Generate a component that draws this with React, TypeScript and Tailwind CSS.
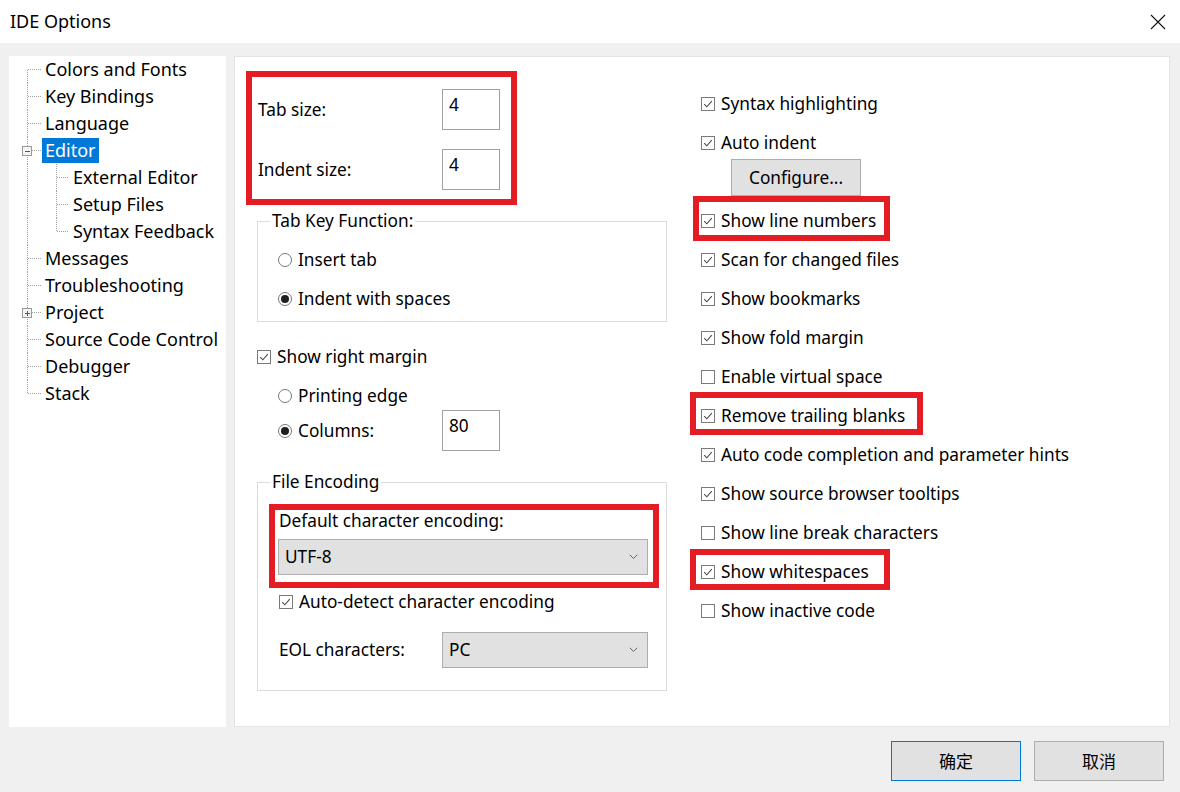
import React from 'react';

type TreeItem = {
  label: string;
  level: 1 | 2;
  box?: 'minus' | 'plus';
  selected?: boolean;
  first?: boolean;
  last?: boolean;
  lastChild?: boolean;
};

const tree: TreeItem[] = [
  { label: 'Colors and Fonts', level: 1, first: true },
  { label: 'Key Bindings', level: 1 },
  { label: 'Language', level: 1 },
  { label: 'Editor', level: 1, box: 'minus', selected: true },
  { label: 'External Editor', level: 2 },
  { label: 'Setup Files', level: 2 },
  { label: 'Syntax Feedback', level: 2, lastChild: true },
  { label: 'Messages', level: 1 },
  { label: 'Troubleshooting', level: 1 },
  { label: 'Project', level: 1, box: 'plus' },
  { label: 'Source Code Control', level: 1 },
  { label: 'Debugger', level: 1 },
  { label: 'Stack', level: 1, last: true },
];

const dot = { stroke: '#a0a0a0', strokeDasharray: '1 1', shapeRendering: 'crispEdges' as const };

function Connector({ item }: { item: TreeItem }) {
  if (item.level === 2) {
    return (
      <svg width="61" height="27" className="shrink-0">
        <line x1="18.5" y1="0" x2="18.5" y2="27" {...dot} />
        <line x1="47.5" y1="0" x2="47.5" y2={item.lastChild ? 13.5 : 27} {...dot} />
        <line x1="48" y1="13.5" x2="60" y2="13.5" {...dot} />
      </svg>
    );
  }
  return (
    <svg width="33" height="27" className="shrink-0">
      <line x1="18.5" y1={item.first ? 13.5 : 0} x2="18.5" y2={item.last ? 13.5 : 27} {...dot} />
      <line x1="19" y1="13.5" x2="33" y2="13.5" {...dot} />
      {item.box && (
        <g shapeRendering="crispEdges">
          <rect x="13.5" y="9.5" width="9" height="9" fill="#f4f4f4" stroke="#9a9a9a" />
          <line x1="15.5" y1="14" x2="21" y2="14" stroke="#3b5a94" />
          {item.box === 'plus' && <line x1="18" y1="11.5" x2="18" y2="17" stroke="#3b5a94" />}
        </g>
      )}
    </svg>
  );
}

function Check({ on }: { on: boolean }) {
  return (
    <span className="w-[14px] h-[14px] border border-[#7a7a7a] bg-white flex items-center justify-center shrink-0">
      {on && (
        <svg width="12" height="12" viewBox="0 0 12 12">
          <path d="M2.2 6.2 L4.8 8.8 L9.8 3.2" fill="none" stroke="#4a4a4a" strokeWidth="1.1" />
        </svg>
      )}
    </span>
  );
}

function Radio({ on }: { on: boolean }) {
  return (
    <span className="w-[14px] h-[14px] rounded-full border border-[#777] bg-white flex items-center justify-center shrink-0">
      {on && <span className="w-[8px] h-[8px] rounded-full bg-[#1f1f1f]" />}
    </span>
  );
}

function CheckRow({ label, on }: { label: string; on: boolean }) {
  return (
    <div className="h-[26px] flex items-center gap-[6px] w-fit">
      <Check on={on} />
      <span>{label}</span>
    </div>
  );
}

function RadioRow({ label, on }: { label: string; on: boolean }) {
  return (
    <div className="flex items-center gap-[6px]">
      <Radio on={on} />
      <span>{label}</span>
    </div>
  );
}

function Chevron() {
  return (
    <svg width="9" height="6" viewBox="0 0 9 6">
      <path d="M0.8 0.8 L4.5 4.5 L8.2 0.8" fill="none" stroke="#666" strokeWidth="1" />
    </svg>
  );
}

function Select({ value, className }: { value: string; className: string }) {
  return (
    <div className={`flex items-center justify-between border border-[#adadad] bg-[#e1e1e1] pl-[6px] pr-[9px] ${className}`}>
      <span>{value}</span>
      <Chevron />
    </div>
  );
}

function NumBox({ value }: { value: string }) {
  return (
    <div className="w-[58px] h-[41px] border border-[#a0a0a0] bg-white pl-[6px] pt-[3px] leading-[24px] shrink-0">
      {value}
    </div>
  );
}

function Group({ title, className, children }: { title: string; className: string; children: React.ReactNode }) {
  return (
    <div className={`w-[410px] border border-[#dcdcdc] flex flex-col ${className}`}>
      <span className="-mt-[12px] ml-[12px] px-[2px] bg-white w-fit leading-[22px]">{title}</span>
      {children}
    </div>
  );
}

function RedBox({ className }: { className: string }) {
  return <span className={`absolute border-[6px] border-[#e41c23] pointer-events-none ${className}`} />;
}

export default function App() {
  const right: { label: string; on: boolean; mark?: string }[] = [
    { label: 'Scan for changed files', on: true },
    { label: 'Show bookmarks', on: true },
    { label: 'Show fold margin', on: true },
    { label: 'Enable virtual space', on: false },
    { label: 'Remove trailing blanks', on: true, mark: 'trail' },
    { label: 'Auto code completion and parameter hints', on: true },
    { label: 'Show source browser tooltips', on: true },
    { label: 'Show line break characters', on: false },
    { label: 'Show whitespaces', on: true, mark: 'ws' },
    { label: 'Show inactive code', on: false },
  ];

  return (
    <div className="w-[1180px] h-[792px] bg-[#f0f0f0] flex flex-col text-[17.25px] text-black font-['Noto_Sans','Liberation_Sans',sans-serif] overflow-hidden">
      {/* title bar */}
      <div className="h-[43px] bg-white flex items-center justify-between pl-[10px] pr-[14px] shrink-0">
        <span className="text-[18px]">IDE Options</span>
        <svg width="16" height="16" viewBox="0 0 16 16">
          <path d="M1 1 L15 15 M15 1 L1 15" stroke="#111" strokeWidth="1.1" />
        </svg>
      </div>

      <div className="flex gap-[8px] pt-[13px] px-[9px] h-[684px] shrink-0">
        {/* tree */}
        <div className="w-[217px] h-[671px] bg-white flex flex-col text-[18px]">
          {tree.map((t) => (
            <div key={t.label} className="h-[27px] flex items-center shrink-0">
              <Connector item={t} />
              <span
                className={
                  t.selected
                    ? 'h-[25px] flex items-center px-[3px] bg-[#0078d7] text-white'
                    : 'h-[25px] flex items-center px-[3px] whitespace-nowrap'
                }
              >
                {t.label}
              </span>
            </div>
          ))}
        </div>

        {/* options page */}
        <div className="w-[936px] h-[671px] bg-white border border-[#e3e3e3] flex">
          {/* left column */}
          <div className="w-[445px] pl-[22px] flex flex-col">
            <div className="relative mt-[32px] ml-[1px] w-fit flex flex-col gap-[19px]">
              <RedBox className="-left-[12px] -top-[18px] -right-[17px] -bottom-[15px]" />
              <div className="flex items-center">
                <span className="w-[184px]">Tab size:</span>
                <NumBox value="4" />
              </div>
              <div className="flex items-center">
                <span className="w-[184px]">Indent size:</span>
                <NumBox value="4" />
              </div>
            </div>

            <Group title="Tab Key Function:" className="mt-[31px] h-[101px]">
              <div className="pl-[20px] flex flex-col">
                <div className="h-[26px] mt-[15px] flex items-center">
                  <RadioRow label="Insert tab" on={false} />
                </div>
                <div className="h-[26px] mt-[13px] flex items-center">
                  <RadioRow label="Indent with spaces" on={true} />
                </div>
              </div>
            </Group>

            <div className="mt-[22px]">
              <CheckRow label="Show right margin" on={true} />
            </div>
            <div className="h-[26px] mt-[13px] ml-[21px] flex items-center">
              <RadioRow label="Printing edge" on={false} />
            </div>
            <div className="h-[41px] mt-[1px] ml-[21px] flex items-center">
              <div className="w-[164px]">
                <RadioRow label="Columns:" on={true} />
              </div>
              <NumBox value="80" />
            </div>

            <Group title="File Encoding" className="mt-[31px] h-[209px]">
              <div className="pl-[20px] flex flex-col">
                <div className="relative mt-[16px] w-[370px] flex flex-col">
                  <RedBox className="-left-[9px] -top-[5px] -right-[11px] -bottom-[13px]" />
                  <span className="h-[24px] pl-[1px] flex items-center">Default character encoding:</span>
                  <Select value="UTF-8" className="mt-[6px] h-[36px] w-[370px]" />
                </div>
                <div className="mt-[14px] ml-[1px]">
                  <CheckRow label="Auto-detect character encoding" on={true} />
                </div>
                <div className="mt-[17px] flex items-center">
                  <span className="w-[164px] pl-[1px]">EOL characters:</span>
                  <Select value="PC" className="h-[36px] w-[206px]" />
                </div>
              </div>
            </Group>
          </div>

          {/* right column */}
          <div className="flex-1 pl-[21px] flex flex-col">
            <div className="mt-[34px]">
              <CheckRow label="Syntax highlighting" on={true} />
            </div>
            <div className="mt-[13px]">
              <CheckRow label="Auto indent" on={true} />
            </div>
            <button className="mt-[3px] ml-[30px] w-[130px] h-[37px] border border-[#adadad] bg-[#e1e1e1] flex items-center justify-center">
              Configure...
            </button>
            <div className="relative mt-[12px] w-fit">
              <RedBox className="-left-[8px] -top-[12px] -right-[14px] -bottom-[7px]" />
              <CheckRow label="Show line numbers" on={true} />
            </div>
            {right.map((r) => (
              <div key={r.label} className="relative mt-[13px] w-fit">
                {r.mark === 'trail' && <RedBox className="-left-[11px] -top-[11px] -right-[18px] -bottom-[6px]" />}
                {r.mark === 'ws' && <RedBox className="-left-[11px] -top-[10px] -right-[21px] -bottom-[5px]" />}
                <CheckRow label={r.label} on={r.on} />
              </div>
            ))}
          </div>
        </div>
      </div>

      {/* buttons */}
      <div className="flex justify-end gap-[13px] pr-[16px] pt-[14px]">
        <button className="w-[130px] h-[40px] border border-[#0078d7] bg-[#e1e1e1] font-['Noto_Sans_CJK_SC',sans-serif] text-[17px]">
          确定
        </button>
        <button className="w-[130px] h-[40px] border border-[#adadad] bg-[#e1e1e1] font-['Noto_Sans_CJK_SC',sans-serif] text-[17px]">
          取消
        </button>
      </div>
    </div>
  );
}
